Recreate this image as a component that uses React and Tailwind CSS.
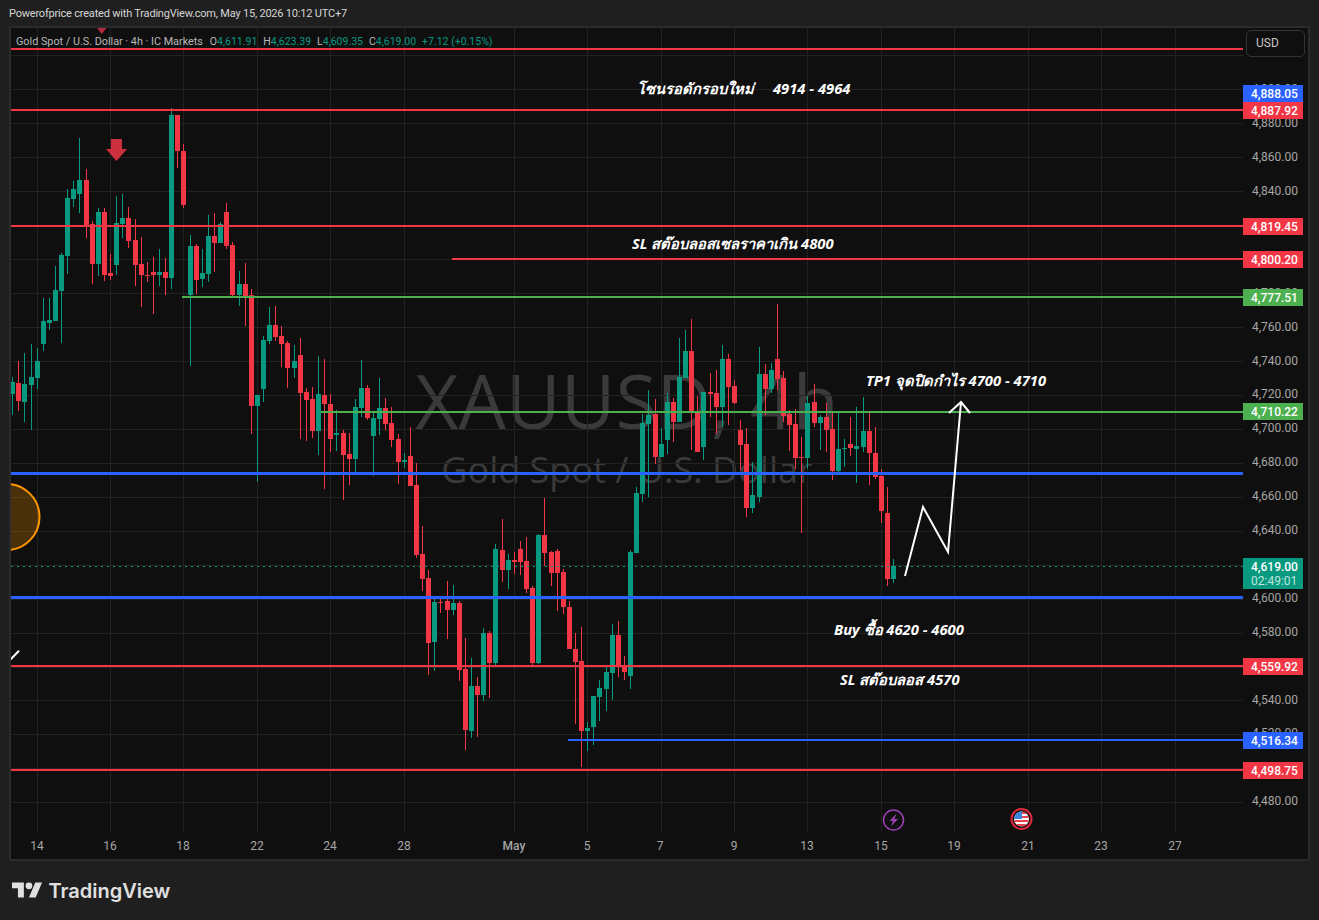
import React from "react";

const groups = [
  { ox: 0, oy: 100, rows: [
    [38,830,846,882,945,"g"],[55,783,849,903,933,"r"],[73,759,852,906,966,"g"],[94,732,831,855,990,"g"],[112,744,783,834,866,"g"],
    [130,594,663,732,753,"g"],[148,594,660,669,690,"g"],[166,498,570,663,663,"g"],[184,459,465,573,729,"g"],[202,267,294,468,522,"g"],
    [220,243,267,297,321,"g"],[238,114,240,282,339,"g"],[259,207,240,378,414,"r"],[277,363,372,492,552,"r"],[295,324,336,492,528,"g"],
    [313,324,336,525,543,"r"],[331,462,519,528,540,"r"],[349,288,369,495,525,"g"],[367,282,354,372,414,"g"],[385,321,354,423,444,"r"],
    [406,357,420,495,558,"r"],[424,411,492,525,621,"r"],[442,486,525,528,546,"r"],[460,471,516,525,642,"r"],[478,447,516,525,558,"g"],
    [496,474,516,534,585,"r"],[514,24,45,534,567,"g"],[532,45,45,153,204,"r"],[550,132,153,315,324,"r"],[571,405,438,585,798,"g"],
    [589,432,438,540,582,"r"],[607,447,519,537,561,"g"],[625,345,408,522,546,"g"],[643,339,408,429,516,"r"],[661,366,372,429,429,"g"],
    [679,309,336,438,447,"r"],[697,426,435,585,591,"r"],[718,513,552,585,618,"g"],[736,489,552,588,678,"r"],[754,567,585,918,1002,"r"],
  ]},
  { ox: 240, oy: 290, rows: [
    [52,315,315,348,576,"g"],[70,138,150,297,336,"g"],[88,51,105,153,162,"g"],[106,48,105,141,153,"r"],[124,108,138,162,231,"r"],
    [142,153,159,234,294,"r"],[163,165,213,234,264,"g"],[181,144,195,309,447,"r"],[199,294,306,330,453,"r"],[217,291,327,423,444,"r"],
    [235,198,312,423,495,"g"],[253,207,315,342,597,"r"],[271,312,342,447,486,"r"],[289,360,429,435,483,"g"],[310,420,429,495,630,"r"],
    [328,429,492,507,585,"r"],[346,327,351,507,546,"g"],[364,210,294,354,381,"g"],[382,285,294,384,390,"r"],[400,366,384,438,558,"g"],
    [418,264,354,387,435,"g"],[436,324,354,402,420,"r"],[454,351,399,450,471,"r"],[475,432,447,516,582,"r"],[493,489,510,516,534,"g"],
    [511,411,498,588,588,"r"],[529,519,585,795,804,"r"],
  ]},
  { ox: 400, oy: 500, rows: [
    [67,78,162,237,273,"r"],[85,210,234,429,525,"r"],[103,288,306,426,513,"g"],[121,291,306,309,339,"r"],[142,243,303,330,417,"r"],
    [160,255,309,330,345,"g"],[178,303,309,510,543,"r"],[196,414,507,690,750,"r"],[214,474,558,693,714,"g"],[232,531,558,585,711,"r"],
    [250,384,399,585,603,"g"],[268,393,399,489,594,"r"],[286,132,147,489,498,"g"],[307,57,150,210,246,"r"],[325,162,180,210,267,"g"],
    [343,156,180,186,222,"r"],[361,123,147,186,225,"r"],[379,111,183,267,279,"r"],[397,258,264,489,495,"r"],[415,102,105,489,492,"g"],
    [433,-6,105,159,198,"r"],[454,153,156,219,258,"r"],[472,147,153,219,333,"r"],[490,207,216,321,342,"r"],[508,303,321,447,447,"r"],
    [526,399,447,486,672,"r"],[544,381,483,693,801,"r"],[562,666,684,693,753,"g"],[580,588,588,681,735,"g"],[598,540,564,591,663,"g"],
    [619,495,516,567,633,"g"],[637,372,405,519,600,"g"],[655,363,405,498,531,"r"],[673,468,498,516,540,"r"],[691,150,156,528,567,"g"],
  ]},
  { ox: 620, oy: 290, rows: [
    [48,591,609,789,789,"g"],[67,372,399,612,636,"g"],[85,300,375,402,621,"g"],[106,327,372,501,522,"r"],[124,414,462,501,501,"g"],
    [142,309,336,450,492,"g"],[160,324,336,396,456,"r"],[178,144,261,396,396,"g"],[196,120,183,264,264,"g"],[214,87,183,366,480,"r"],
    [232,318,363,486,486,"r"],[250,306,306,471,510,"g"],[271,249,306,312,381,"r"],[289,240,309,351,432,"r"],[307,165,207,351,411,"g"],
    [325,192,207,291,405,"r"],[343,270,288,339,342,"r"],[361,390,420,465,540,"r"],[379,414,462,654,681,"r"],[397,516,615,654,669,"g"],
    [418,171,252,621,636,"g"],[436,222,252,297,375,"r"],[454,219,240,297,309,"g"],[472,42,207,267,300,"r"],[490,243,264,378,396,"r"],
    [508,360,372,405,483,"r"],[526,357,402,504,537,"r"],[544,441,501,504,729,"r"],[562,318,339,504,537,"g"],[583,282,336,399,411,"r"],
    [601,375,381,399,480,"g"],[619,339,381,420,486,"r"],[637,366,417,543,570,"r"],[655,366,477,543,552,"g"],[673,447,474,477,531,"g"],
    [691,381,462,474,498,"r"],[709,351,468,477,579,"g"],[730,321,423,471,486,"g"],[748,366,423,489,585,"r"],[766,411,489,561,567,"r"],
    [784,537,558,663,699,"r"],[802,591,669,867,888,"r"],[820,807,828,867,879,"g"],
  ]},
];

const candles = groups.flatMap(({ ox, oy, rows }) =>
  rows.map(([zx, wt, bt, bb, wb, c]) => ({
    x: Math.floor(ox + zx / 3),
    wt: Math.round(oy + wt / 3),
    bt: Math.round(oy + bt / 3),
    bb: Math.round(oy + bb / 3),
    wb: Math.round(oy + wb / 3),
    c: c === "g" ? "#089981" : "#f23645",
  }))
);

const vGrid = [37, 110, 183, 257, 330, 404, 514, 587, 661, 734, 807, 881, 954, 1028, 1101, 1175];
const hGrid = Array.from({ length: 23 }, (_, k) => Math.round(802.3 - k * 33.95));

const hLines = [
  { y: 48, x1: 10, h: 2, c: "#f23645" },
  { y: 109, x1: 10, h: 2, c: "#f23645" },
  { y: 225, x1: 10, h: 2, c: "#f23645" },
  { y: 258, x1: 452, h: 2, c: "#f23645" },
  { y: 296, x1: 182, h: 2, c: "#4caf50" },
  { y: 411, x1: 321, h: 2, c: "#4caf50" },
  { y: 472, x1: 10, h: 3, c: "#2962ff" },
  { y: 596, x1: 10, h: 3, c: "#2962ff" },
  { y: 665, x1: 10, h: 2, c: "#f23645" },
  { y: 739, x1: 568, h: 2, c: "#2962ff" },
  { y: 769, x1: 10, h: 2, c: "#f23645" },
];

const ticks = [
  ["4,900.00", 90], ["4,880.00", 124], ["4,860.00", 158], ["4,840.00", 192], ["4,780.00", 294], ["4,760.00", 328],
  ["4,740.00", 362], ["4,720.00", 395], ["4,700.00", 429], ["4,680.00", 463], ["4,660.00", 497], ["4,640.00", 531],
  ["4,600.00", 599], ["4,580.00", 633], ["4,540.00", 701], ["4,520.00", 734], ["4,480.00", 802],
];

const tags = [
  ["4,888.05", 85, "bg-[#2962ff]"],
  ["4,887.92", 102, "bg-[#f23645]"],
  ["4,819.45", 218, "bg-[#f23645]"],
  ["4,800.20", 251, "bg-[#f23645]"],
  ["4,777.51", 289, "bg-[#4caf50]"],
  ["4,710.22", 403, "bg-[#4caf50]"],
  ["4,559.92", 658, "bg-[#f23645]"],
  ["4,516.34", 732, "bg-[#2962ff]"],
  ["4,498.75", 762, "bg-[#f23645]"],
];

const times = [
  ["14", 37], ["16", 110], ["18", 183], ["22", 257], ["24", 330], ["28", 404], ["May", 514], ["5", 587],
  ["7", 660], ["9", 734], ["13", 807], ["15", 881], ["19", 954], ["21", 1028], ["23", 1101], ["27", 1175],
];

const notes = [
  ["โซนรอดักรอบใหม่", 637, 79],
  ["4914 - 4964", 773, 79],
  ["SL สต๊อบลอสเซลราคาเกิน 4800", 632, 234],
  ["TP1 จุดปิดกำไร 4700 - 4710", 866, 371],
  ["Buy ซื้อ 4620 - 4600", 834, 620],
  ["SL สต๊อบลอส 4570", 840, 670],
];

function Chart() {
  return (
    <svg viewBox="11 28 1232 804" width="1232" height="804" className="absolute inset-0">
      <defs>
        <clipPath id="flag"><circle cx="1021.5" cy="819" r="7.5" /></clipPath>
      </defs>
      <g shapeRendering="crispEdges">
        {vGrid.map((x) => <rect key={x} x={x} y="28" width="1" height="804" fill="#222222" />)}
        {hGrid.map((y) => <rect key={y} x="11" y={y} width="1232" height="1" fill="#222222" />)}
        {candles.map((k, i) => (
          <g key={i} fill={k.c}>
            <rect x={k.x} y={k.wt} width="1" height={Math.max(k.wb - k.wt, 1)} />
            <rect x={k.x - 2} y={k.bt} width="5" height={Math.max(k.bb - k.bt, 1)} />
          </g>
        ))}
      </g>
      <line x1="11" x2="1243" y1="566.5" y2="566.5" stroke="#089981" strokeDasharray="2 4" />
      <circle cx="6.5" cy="517" r="33" fill="#ff9800" fillOpacity="0.25" stroke="#ff9800" strokeWidth="2" />
      <g shapeRendering="crispEdges">
        {hLines.map((l) => <rect key={l.y} x={l.x1} y={l.y} width={1243 - l.x1} height={l.h} fill={l.c} />)}
      </g>
      <path d="M97 28h9.5l-4.75 6z" fill="#b22a3b" />
      <path d="M111 139h11v10h5l-10.5 12-10.500-12h5z" fill="#cc2f3e" />
      <line x1="10.700" y1="659.300" x2="19" y2="650.700" stroke="#ffffff" strokeWidth="2" />
      <path d="M905 576L923 507L948 552L961 402M949 413L961 402L970 413" fill="none" stroke="#ffffff" strokeWidth="2" />
      <circle cx="893.5" cy="820" r="10" fill="#0f0f0f" stroke="#9c3fb5" strokeWidth="1.500" />
      <path d="M896.500 813.500L889.500 821h3.500l-2 5.500L898 819h-3.500z" fill="#9c3fb5" />
      <circle cx="1021.5" cy="819" r="10" fill="#0f0f0f" stroke="#e0283c" strokeWidth="2" />
      <g clipPath="url(#flag)" shapeRendering="crispEdges">
        <rect x="1014" y="811" width="15" height="16" fill="#ffffff" />
        <rect x="1014" y="812" width="15" height="2" fill="#e8434f" />
        <rect x="1014" y="816" width="15" height="2" fill="#e8434f" />
        <rect x="1014" y="820" width="15" height="2" fill="#e8434f" />
        <rect x="1014" y="824" width="15" height="2" fill="#e8434f" />
        <rect x="1014" y="811" width="8" height="8" fill="#3d86e0" />
      </g>
    </svg>
  );
}

export default function App() {
  return (
    <div className="w-[1319px] h-[920px] flex flex-col bg-[#1f1f1f] overflow-hidden font-['Roboto',sans-serif]">
      <div className="h-[26px] pl-[9px] pt-[2px] flex items-center text-[11px] tracking-[-0.2px] text-[#d6d6d6] whitespace-nowrap">
        Powerofprice created with TradingView.com, May 15, 2026 10:12 UTC+7
      </div>
      <div className="ml-[9px] w-[1301px] h-[835px] border-2 border-[#2b2b2b] bg-[#0f0f0f] flex flex-col">
        <div className="h-[804px] flex">
          <div className="relative w-[1232px] h-[804px] overflow-hidden">
            <div className="absolute left-0 top-[327px] w-[1232px] flex flex-col items-center text-[#3a3a3a] whitespace-nowrap font-['Open_Sans',sans-serif]">
              <div className="text-[75px] leading-[90px]">XAUUSD, 4h</div>
              <div className="text-[36px] leading-[40px] mt-[5px]">Gold Spot / U.S. Dollar</div>
            </div>
            <Chart />
            <div className="absolute left-[5px] top-[6px] flex items-center gap-[6px] text-[10.5px] leading-[16px] text-[#b8b8b8] whitespace-nowrap">
              <span className="text-[10.8px] mr-[1px]">Gold Spot / U.S. Dollar · 4h · IC Markets</span>
              <span>O<span className="text-[#089981]">4,611.91</span></span>
              <span>H<span className="text-[#089981]">4,623.39</span></span>
              <span>L<span className="text-[#089981]">4,609.35</span></span>
              <span>C<span className="text-[#089981]">4,619.00</span></span>
              <span className="text-[#089981]">+7.12 (+0.15%)</span>
            </div>
            {notes.map(([t, x, y]) => (
              <div
                key={t}
                className="absolute text-[14.75px] leading-[18px] font-bold italic text-white whitespace-nowrap font-['Open_Sans',sans-serif]"
                style={{ left: x - 11, top: y - 28 }}
              >
                {t}
              </div>
            ))}
          </div>
          <div className="relative flex-1 text-[12px] leading-[17px]">
            <div className="absolute left-[3px] top-[2px] w-[59px] h-[27px] border border-[#333333] rounded-[5px] flex items-center pl-[9px] text-[#c8c8c8]">USD</div>
            {ticks.map(([t, y]) => (
              <div key={t} className="absolute left-[9px] text-[#a6a6a6]" style={{ top: y - 28 - 9 }}>{t}</div>
            ))}
            {tags.map(([t, y, c]) => (
              <div key={t} className={`absolute left-0 w-[60px] h-[17px] pl-[8px] font-medium leading-[18px] text-white ${c}`} style={{ top: y - 28 }}>{t}</div>
            ))}
            <div className="absolute left-0 top-[530px] w-[60px] h-[31px] pl-[8px] bg-[#089981] text-white flex flex-col justify-center leading-[14px]">
              <span className="font-medium">4,619.00</span>
              <span className="text-[#bfe6de]">02:49:01</span>
            </div>
          </div>
        </div>
        <div className="relative flex-1 text-[12px] text-[#a6a6a6]">
          {times.map(([t, x]) => (
            <span key={t} className={`absolute top-[5px] -translate-x-1/2 ${t === "May" ? "font-medium" : ""}`} style={{ left: x - 11 }}>{t}</span>
          ))}
        </div>
      </div>
      <div className="flex-1 pl-[12px] flex items-start pt-[18px] gap-[6px]">
        <svg viewBox="0 0 36 28" width="30.5" height="23.7" fill="#e0e0e0">
          <path d="M14 22H7V11H0V4h14v18zM28 22h-8l7.500-18h8L28 22z" />
          <circle cx="20" cy="8" r="4" />
        </svg>
        <span className="text-[20px] leading-[24px] font-semibold text-[#e0e0e0] font-['Inter',sans-serif]">TradingView</span>
      </div>
    </div>
  );
}
